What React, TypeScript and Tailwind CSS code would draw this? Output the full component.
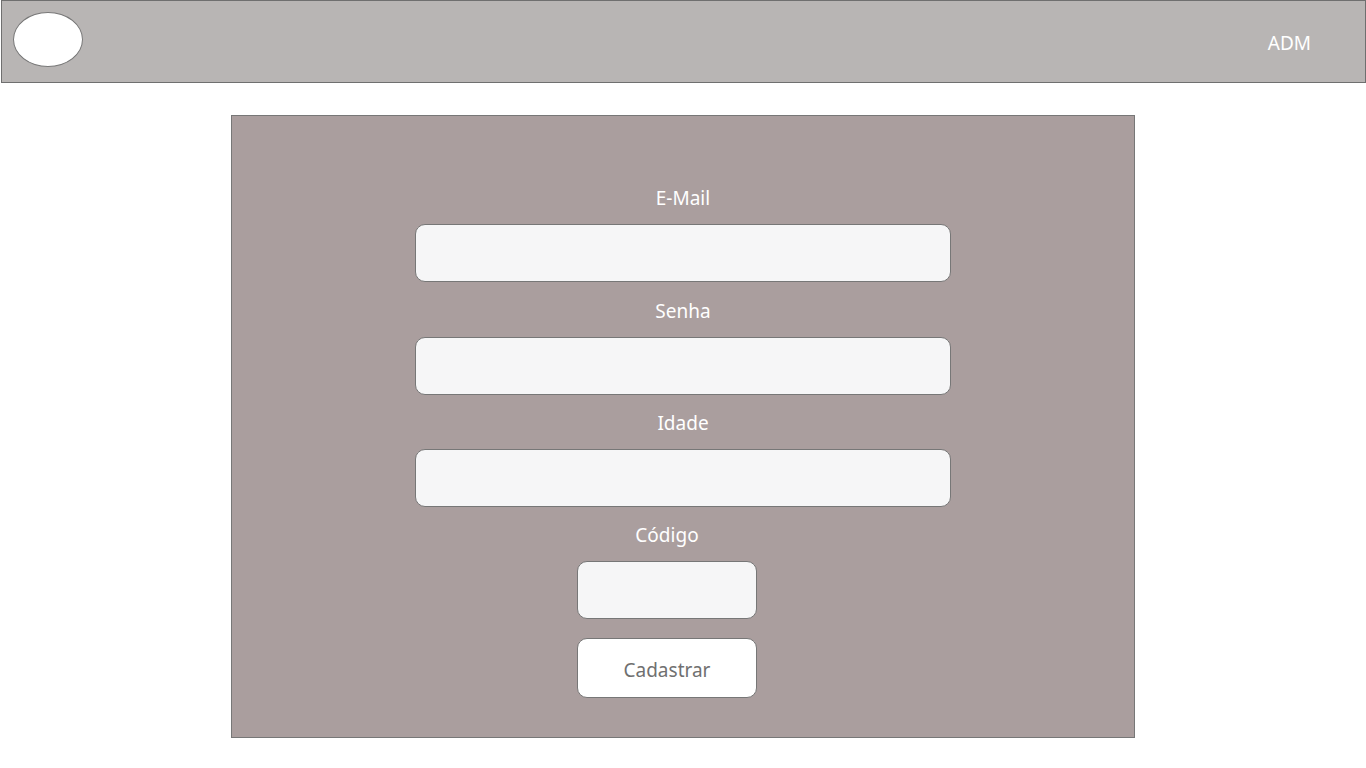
export default function App() {
  const font = { fontFamily: '"Noto Sans", "Open Sans", sans-serif' };
  return (
    <div className="min-h-[768px] bg-white" style={font}>
      <header className="ml-px flex h-[83px] items-center justify-between border border-[#6f6f6f] bg-[#b8b5b4] pl-[11px] pr-[54px]">
        <div className="mb-[5px] h-[55px] w-[70px] rounded-[50%] border border-[#777] bg-white" />
        <span className="pt-[4px] text-[19px] text-white">ADM</span>
      </header>

      <main className="flex justify-center pt-[32px]">
        <div className="flex w-[904px] flex-col items-center border border-[#777] bg-[#aa9e9e] pt-[68px] pb-[39px]">
          <form className="flex flex-col items-center">
            <label className="mb-3 text-[19px] leading-[28px] text-white">E-Mail</label>
            <input className="h-[58px] w-[536px] rounded-[10px] border border-[#777] bg-[#f6f6f7] outline-none" />

            <label className="mt-[15px] mb-3 text-[19px] leading-[28px] text-white">Senha</label>
            <input type="password" className="h-[58px] w-[536px] rounded-[10px] border border-[#777] bg-[#f6f6f7] outline-none" />

            <label className="mt-[14px] mb-3 text-[19px] leading-[28px] text-white">Idade</label>
            <input className="h-[58px] w-[536px] rounded-[10px] border border-[#777] bg-[#f6f6f7] outline-none" />

            <div className="mr-[32px] flex flex-col items-center">
              <label className="mt-[14px] mb-3 text-[19px] leading-[28px] text-white">Código</label>
              <input className="h-[58px] w-[180px] rounded-[10px] border border-[#777] bg-[#f6f6f7] outline-none" />
              <button
                type="button"
                className="mt-[19px] h-[60px] w-[180px] rounded-[10px] border border-[#777] bg-white pt-[4px] text-[19px] text-[#707070]"
              >
                Cadastrar
              </button>
            </div>
          </form>
        </div>
      </main>
    </div>
  );
}
